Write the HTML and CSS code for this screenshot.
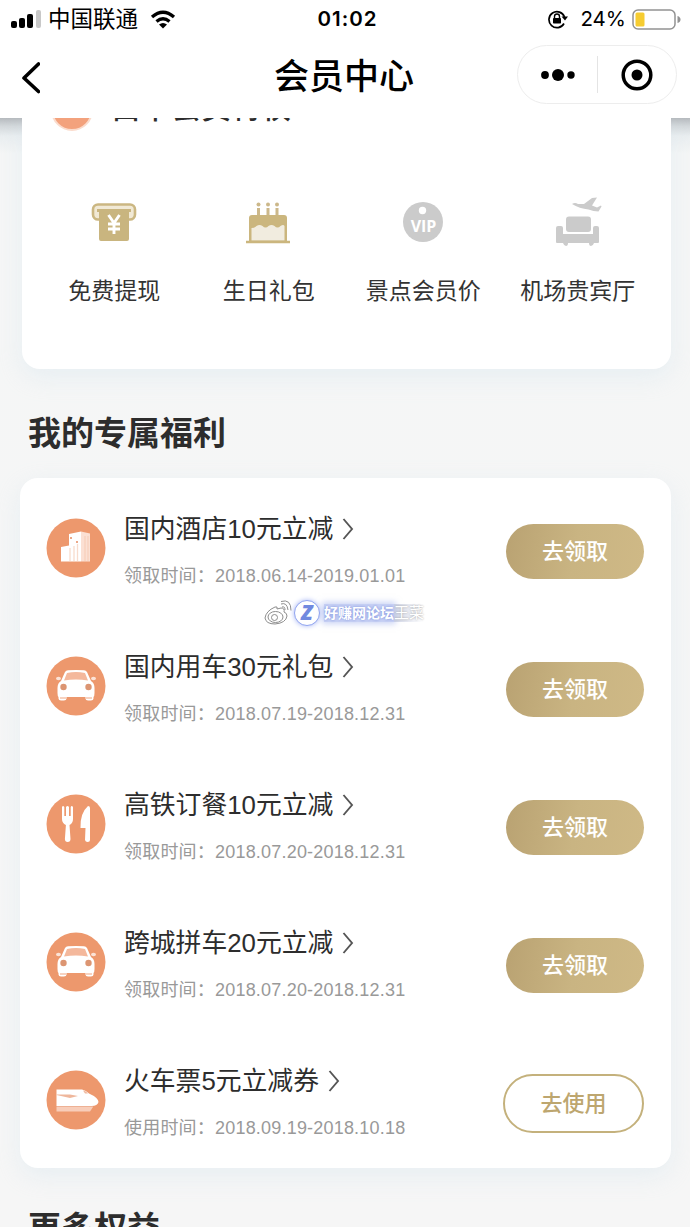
FILE: index.html
```html
<!DOCTYPE html>
<html lang="zh-CN">
<head>
<meta charset="utf-8">
<title>会员中心</title>
<link rel="stylesheet" href="styles.css">
</head>
<body>
<svg class="defs" width="0" height="0" aria-hidden="true">
  <symbol id="car" viewBox="0 0 60 60">
    <circle cx="30" cy="30" r="29.5" fill="#ed986d"/>
    <path fill="#fff" d="M19 16q1-1.500 3-1.700q8-.8 16 0q2 .2 3 1.700l4 9q3.500 2 3.500 7v5q0 3-1 4v1.500q0 2-2.500 2h-3q-2.500 0-2.500-2V41h-19v1.500q0 2-2.500 2h-3q-2.500 0-2.500-2V41q-1-1-1-4v-5q0-5 3.500-7z"/>
    <path fill="#f4b89c" d="M21 17q9-2 18 0l3 7.500q-12-2-24 0z"/>
    <circle cx="17.500" cy="31" r="3.200" fill="#dc9572"/><circle cx="42.500" cy="31" r="3.200" fill="#dc9572"/>
    <ellipse cx="12.500" cy="22.500" rx="2.500" ry="1.800" fill="#fbe3d7"/><ellipse cx="47.500" cy="22.500" rx="2.500" ry="1.800" fill="#fbe3d7"/>
    <path d="M14 42h6M40 42h6" stroke="#f7d2c0" stroke-width="2"/>
  </symbol>
</svg>

<header class="header">
  <div class="status">
    <div class="carrier">
      <svg class="signal" viewBox="0 0 31 20"><rect y="12" width="6" height="7" rx="2"/><rect x="8" y="9" width="6" height="10" rx="2"/><rect x="16" y="5" width="6" height="14" rx="2"/><rect x="25" y="1" width="5" height="18" rx="2" fill="#c8c8c8"/></svg>
      <span>中国联通</span>
      <svg class="wifi" viewBox="0 0 26 19"><path d="M2 7q11-9.500 22 0M6.500 11.500q6.500-5.500 13 0" fill="none" stroke="#000" stroke-width="3.300"/><path d="M9 14.500q4-3 8 0l-4 4z"/></svg>
    </div>
    <span class="clock">01:02</span>
    <div class="power">
      <svg class="lock" viewBox="0 0 22 20"><path d="M17 14.500A8 8 0 1 1 17.500 8" fill="none" stroke="#000" stroke-width="1.700"/><path d="M14.500 7.500H21L18 11.500z"/><rect x="6" y="9" width="8" height="5.500" rx=".7"/><path d="M7.500 9V7.500a2.500 2.500 0 0 1 5 0V9" fill="none" stroke="#000" stroke-width="1.400"/></svg>
      <span>24%</span>
      <svg class="battery" viewBox="0 0 49 21"><rect x="1" y="1" width="42" height="19" rx="5" fill="#fff" stroke="#929292" stroke-width="1.500"/><rect x="3.500" y="3.500" width="9" height="14" rx="1.500" fill="#f6cc31"/><path d="M45.500 7q3 1 3 3.500t-3 3.500z" fill="#929292"/></svg>
    </div>
  </div>
  <div class="navbar">
    <svg class="back" viewBox="0 0 20 34"><path d="M18.500 3L4 17L18.500 30.500" fill="none" stroke="#000" stroke-width="3.600" stroke-linecap="round" stroke-linejoin="round"/></svg>
    <h1>会员中心</h1>
    <div class="capsule">
      <svg viewBox="0 0 34 14"><circle cx="4" cy="7" r="3.900"/><circle cx="17" cy="7" r="6"/><circle cx="30" cy="7" r="3.700"/></svg>
      <i></i>
      <svg class="target" viewBox="0 0 32 32"><circle cx="16" cy="16" r="13.800" fill="none" stroke="#000" stroke-width="3.500"/><circle cx="16" cy="16" r="5.500"/></svg>
    </div>
  </div>
</header>

<main class="page">
  <section class="card privileges">
    <div class="card-head"><b class="badge"></b><h3>白卡会员特权</h3></div>
    <div class="grid">
      <div class="item">
        <svg viewBox="0 0 48 48"><rect x="3" y="4.500" width="42" height="15" rx="5" fill="#f1e9d5" stroke="#cbb782" stroke-width="2.600"/><path fill="#c9b57f" d="M7 9h34v3h-2v27q0 2-2 2H11q-2 0-2-2V12H7z"/><path d="M18.500 15l5.500 8l5.500-8M18 24h12M18 29h12M24 23v11" fill="none" stroke="#fff" stroke-width="2.900"/></svg>
        <span>免费提现</span>
      </div>
      <div class="item">
        <svg viewBox="0 0 48 48"><path d="M13.500 8v9M23 8v9M32 8v9" stroke="#ccb88a" stroke-width="3"/><g fill="#ccb88a"><circle cx="13.500" cy="4.500" r="2"/><circle cx="23" cy="4.500" r="2"/><circle cx="32" cy="4.500" r="2"/></g><path fill="#cbb67e" d="M4 18q0-3 3-3h32q3 0 3 3v24H4z"/><path fill="#f1ecdf" d="M6.500 28q3 0 5-2q3-2 6 0q3 3 6 0q3-2 6 0q3 3 6 0q3-2 4 0v14.500H6.500z"/><path d="M1 42h44" stroke="#cbb67e" stroke-width="2.500"/></svg>
        <span>生日礼包</span>
      </div>
      <div class="item">
        <svg viewBox="0 0 48 48"><circle cx="24" cy="22" r="20" fill="#cbcbcb"/><circle cx="23.500" cy="10.500" r="3.700" fill="#fff"/><text x="24.500" y="32" text-anchor="middle" class="vip">VIP</text></svg>
        <span>景点会员价</span>
      </div>
      <div class="item">
        <svg viewBox="0 0 48 48"><g fill="#cbcbcb"><path d="M18 4q3-2 6 0l6 0l8-6l5-.5l-5 8l5 2l4-2l.5 1l-3 5q-5 0-10-2q-9-1-16.500-5.500z"/><rect x="12" y="16.500" width="25" height="15.500" rx="3"/><path d="M2 28q0-2 2-2h3q2 0 2 2v6h30v-6q0-2 2-2h2q2 0 2 2v14q0 1-1 1h-4q-1 3-3 3t-2-3H14q0 3-2 3t-3-3H3q-1 0-1-1z"/></g></svg>
        <span>机场贵宾厅</span>
      </div>
    </div>
  </section>

  <h2>我的专属福利</h2>

  <section class="card benefits">
    <article class="row">
      <svg class="icon" viewBox="0 0 60 60"><circle cx="30" cy="30" r="29.500" fill="#ed986d"/><path fill="#fff" d="M15 29l8-1.500V16l12-2.500v30H15z"/><path fill="#fbe0d3" d="M35 13.500l9 2v28h-9z"/><path d="M24 30v13M28 28v15M31.500 26v17" stroke="#f8dccd" stroke-width="1.300"/><path d="M39 18v25M42 18v25" stroke="#f6cbb5"/><path d="M24 20h2M30 24h2" stroke="#eba888" stroke-width="2"/></svg>
      <div class="info"><h4>国内酒店10元立减<svg class="chev" viewBox="0 0 12 24"><path d="M1.500 2L10 12L1.500 22"/></svg></h4><p>领取时间：2018.06.14-2019.01.01</p></div>
      <a class="btn">去领取</a>
    </article>
    <article class="row">
      <svg class="icon"><use href="#car"/></svg>
      <div class="info"><h4>国内用车30元礼包<svg class="chev" viewBox="0 0 12 24"><path d="M1.500 2L10 12L1.500 22"/></svg></h4><p>领取时间：2018.07.19-2018.12.31</p></div>
      <a class="btn">去领取</a>
    </article>
    <article class="row">
      <svg class="icon" viewBox="0 0 60 60"><circle cx="30" cy="30" r="29.500" fill="#ed986d"/><path fill="#fff" d="M16 13q1-2 2.300 0v9h1.700V13q1.500-2 3 0v9h1.700v-9q1-2 2.300 0v12q0 4-3.500 6l1 14q0 3-2.800 3t-2.800-3l1-14q-3.900-2-3.900-6z"/><path fill="#fff" d="M42 12q2 0 2 2v32q0 2-2.300 2t-2.700-2l.5-12h-5q-.5-15 7.500-22z"/></svg>
      <div class="info"><h4>高铁订餐10元立减<svg class="chev" viewBox="0 0 12 24"><path d="M1.500 2L10 12L1.500 22"/></svg></h4><p>领取时间：2018.07.20-2018.12.31</p></div>
      <a class="btn">去领取</a>
    </article>
    <article class="row">
      <svg class="icon"><use href="#car"/></svg>
      <div class="info"><h4>跨城拼车20元立减<svg class="chev" viewBox="0 0 12 24"><path d="M1.500 2L10 12L1.500 22"/></svg></h4><p>领取时间：2018.07.20-2018.12.31</p></div>
      <a class="btn">去领取</a>
    </article>
    <article class="row">
      <svg class="icon" viewBox="0 0 60 60"><circle cx="30" cy="30" r="29.500" fill="#ed986d"/><path fill="#fff" d="M10.500 19.500H36q4 1 7 4q9 4 9.500 8.500q-1 4-7 4h-35z"/><path fill="#efb79c" d="M10.500 24.500H24l8 1.500l-8 2l-13.500-3zM37 20.500q3 .5 5 3h-3z"/><path fill="#f8cdb9" d="M10.500 37H47l-3 4.500H10.500z"/><path d="M10.500 36.500H47" stroke="#eeb194"/></svg>
      <div class="info"><h4>火车票5元立减券<svg class="chev" viewBox="0 0 12 24"><path d="M1.500 2L10 12L1.500 22"/></svg></h4><p>使用时间：2018.09.19-2018.10.18</p></div>
      <a class="btn outline">去使用</a>
    </article>
    <div class="watermark">
      <svg class="weibo" viewBox="0 0 28 26"><g fill="none" stroke="#8d8d8d"><path d="M11 7q-9 4-10 11q1 6 10 6q11-1 12-8q0-3-3-4q1-4-3-4l-4 1q1-3-2-2z"/><ellipse cx="11.500" cy="17" rx="7.500" ry="5.500"/><circle cx="10.500" cy="17.500" r="3"/><path d="M17 4q6-2 7 6M17 1.500q10-3 10 9M18 7q3-1 3 3"/></g></svg>
      <span class="mark">Z</span>
      <span class="glow">好赚网论坛</span><span class="ghost">王菜</span>
    </div>
  </section>

  <h2 class="more">更多权益</h2>
</main>
</body>
</html>
```

FILE: styles.css
```css
* { box-sizing: border-box; margin: 0; padding: 0; }
html, body { height: 1227px; overflow: hidden; }
body {
  display: flex;
  flex-direction: column;
  width: 690px;
  background: #f6f6f6;
  color: #2d2d2d;
  font-family: "Liberation Sans", "Noto Sans CJK SC", sans-serif;
}
svg { display: block; flex: none; }
.defs { position: absolute; }

.header { flex: none; height: 118px; background: #fff; color: #000; }
.status {
  display: grid;
  grid-template-columns: 1fr auto 1fr;
  align-items: center;
  height: 38px;
  padding: 0 9px 0 11px;
}
.carrier, .power { display: flex; align-items: center; }
.carrier { font-size: 22.5px; line-height: 36px; }
.carrier span { padding-top: 2px; }
.signal { width: 31px; height: 20px; margin-right: 6px; }
.wifi { width: 26px; height: 19px; margin-left: 12px; }
.clock { font: 600 20.5px/38px Inter, sans-serif; letter-spacing: 1px; margin-left: 3px; }
.power { justify-content: flex-end; font: 400 20.5px/38px Inter, sans-serif; }
.lock { width: 22px; height: 20px; margin-right: 11px; }
.battery { width: 49px; height: 21px; margin-left: 6px; }

.navbar {
  display: grid;
  grid-template-columns: 1fr auto 1fr;
  align-items: center;
  height: 80px;
  padding: 0 13px 7px 20px;
}
.back { width: 20px; height: 34px; margin-top: 6px; }
.navbar h1 { font-size: 35px; font-weight: 500; line-height: 60px; margin: 4px 0 0 -9px; }
.capsule {
  justify-self: end;
  display: flex;
  align-items: center;
  width: 160px;
  height: 59px;
  padding: 0 23px;
  border: 1px solid #ededed;
  border-radius: 30px;
}
.capsule svg { width: 34px; height: 14px; }
.capsule .target { width: 32px; height: 32px; }
.capsule i { width: 1px; height: 37px; margin: 0 23px 0 22px; background: #e4e4e4; }

.page {
  flex: 1;
  min-height: 0;
  padding: 0 19px 0 20px;
  overflow: hidden;
  background: linear-gradient(#b6babe, #d3d8db 8px, #eaeef0 18px, #f5f6f6 36px, #f6f6f6);
}
.card { background: #fff; box-shadow: 0 8px 24px rgba(200, 222, 235, .3); }
.privileges { height: 251px; margin-left: 2px; border-radius: 0 0 18px 18px; }
.card-head { display: flex; height: 70px; padding-left: 29px; overflow: hidden; }
.badge {
  width: 42px;
  height: 42px;
  margin-top: -29px;
  border-radius: 50%;
  background: #f3a27d;
  border: 2px solid #fbdccd;
}
.card-head h3 { margin: -33px 0 0 18px; font-size: 30px; font-weight: 500; line-height: 46px; }
.grid { display: grid; grid-template-columns: repeat(4, 154.500px); margin-left: 15px; }
.item { display: flex; flex-direction: column; align-items: center; padding-top: 12px; }
.item svg { width: 48px; height: 48px; overflow: visible; }
.item span { margin-top: 25px; font-size: 23px; line-height: 36px; color: #333; white-space: nowrap; }
.vip { fill: #fff; font: 700 16px "Open Sans", sans-serif; }

h2 { height: 109px; padding: 40px 0 0 8px; font-size: 33px; font-weight: 700; line-height: 50px; }
.benefits { position: relative; height: 690px; padding: 1px 27px 0 26px; border-radius: 18px; }
.row { display: flex; height: 138px; padding-top: 39px; }
.icon { width: 60px; height: 60px; }
.info { flex: 1; margin-left: 18px; }
.info h4 {
  display: flex;
  align-items: center;
  margin-top: -9px;
  font-size: 25.800px;
  font-weight: 400;
  line-height: 40px;
  white-space: nowrap;
}
.chev { width: 12px; height: 24px; margin-left: 9px; }
.chev path { fill: none; stroke: #555; stroke-width: 1.900; }
.info p { margin-top: 12px; font-size: 18px; line-height: 30px; letter-spacing: .2px; color: #999; white-space: nowrap; }
.btn {
  width: 138px;
  height: 55px;
  margin-top: 6px;
  border-radius: 28px;
  background: linear-gradient(100deg, #b9a272, #c9b482 50%, #cfb986);
  color: #fff;
  font-size: 22px;
  font-weight: 500;
  line-height: 56px;
  text-align: center;
}
.outline {
  width: 141px;
  height: 59px;
  margin-top: 4px;
  border: 2px solid #c4b17c;
  border-radius: 30px;
  background: #fff;
  color: #bda66f;
}

.watermark {
  position: absolute;
  left: 244px;
  top: 119px;
  display: flex;
  align-items: center;
  height: 32px;
  font-size: 14px;
  font-weight: 700;
}
.weibo { width: 28px; height: 26px; }
.mark {
  width: 26px;
  height: 26px;
  margin: 0 4px 0 2px;
  border: 1.500px solid #90a4f0;
  border-radius: 50%;
  background: #fff;
  box-shadow: 0 0 5px #a9b8f5;
  color: #7189df;
  font: italic 900 21px/23px "Noto Sans", sans-serif;
  text-align: center;
}
.glow {
  color: #fff;
  line-height: 18px;
  background: rgba(154, 171, 235, .55);
  box-shadow: 0 0 6px 2px rgba(154, 171, 235, .5);
  text-shadow: 0 0 3px #7188dc;
}
.ghost {
  color: #fff;
  font-size: 15px;
  font-weight: 400;
  line-height: 18px;
  background: linear-gradient(90deg, rgba(190, 197, 220, .7), rgba(235, 235, 235, 0));
  text-shadow: 0 0 2px #999;
}
.more { padding-top: 36px; }
```
